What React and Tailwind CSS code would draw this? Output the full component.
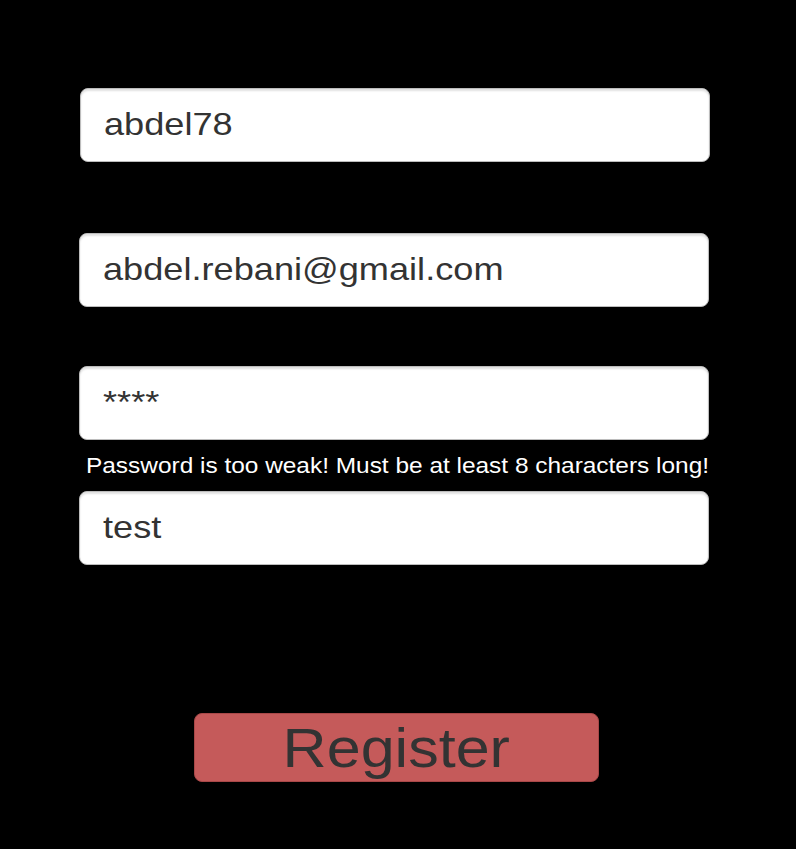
function Field({ value, className = "" }) {
  return (
    <div
      className={[
        "flex h-[74px] w-[630px] items-center rounded-[8px] border border-[#bcbcbc] bg-white pb-[3px] pl-[23px] shadow-[inset_0_2px_2px_rgba(0,0,0,0.12)]",
        className,
      ].join(" ")}
    >
      <span className="origin-left scale-x-[1.13] text-[32px] leading-none text-[#333333]">{value}</span>
    </div>
  );
}

export default function App() {
  return (
    <div
      className="flex h-[849px] w-full flex-col overflow-hidden bg-black pt-[88px]"
      style={{ fontFamily: '"Liberation Sans", Arial, sans-serif' }}
    >
      <Field value="abdel78" className="ml-[80px]" />
      <Field value="abdel.rebani@gmail.com" className="ml-[79px] mt-[71px]" />
      <Field value="****" className="ml-[79px] mt-[59px]" />
      <p className="ml-[86px] mt-[13px] h-[38px] w-fit self-start origin-left scale-x-[1.11] whitespace-nowrap text-[22px] leading-[26px] text-white">
        Password is too weak! Must be at least 8 characters long!
      </p>
      <Field value="test" className="ml-[79px]" />
      <button className="ml-[194px] mt-[148px] flex h-[69px] w-[405px] items-center justify-center rounded-[8px] border border-[#a84848] bg-[#c55a5a]">
        <span className="scale-x-[1.09] text-[56px] leading-none text-[#333333]">Register</span>
      </button>
    </div>
  );
}
